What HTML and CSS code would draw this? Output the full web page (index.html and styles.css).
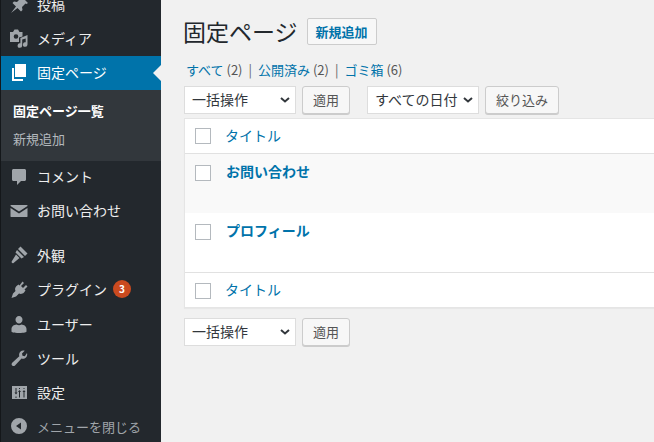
FILE: index.html
```html
<!DOCTYPE html>
<html lang="ja">
<head>
    <meta charset="UTF-8">
    <meta name="viewport" content="width=device-width, initial-scale=1.0">
    <title>固定ページ</title>
    <link rel="stylesheet" href="styles.css">
</head>
<body>
    <aside class="sidebar">
        <ul class="menu">
            <li class="menu-item">
                <svg class="menu-icon" viewBox="0 0 20 20"><path d="M11 1l8 8-1.500 1-1-.5-3.500 3.500.500 3-1.500 1.500-3.500-3.500L2 19l5-6.500-3.500-3.500L5 7.500l3 .5 3.500-3.500-.5-1z"/></svg>
                <span>投稿</span>
            </li>
            <li class="menu-item">
                <svg class="menu-icon" viewBox="0 0 20 20"><path fill-rule="evenodd" d="M1 4h3l1.500-2.500H9L10.500 4h3v4.500l-3.500 1V14H1zm6 2.200a2.300 2.300 0 1 0 0 4.600 2.300 2.300 0 0 0 0-4.600z"/><path d="M18.500 7v9.500a2.300 2.300 0 1 1-1.800-2.200v-3.800l-3.500 1v6a2.300 2.300 0 1 1-1.800-2.200V10z"/></svg>
                <span>メディア</span>
            </li>
            <li class="menu-item current">
                <svg class="menu-icon" viewBox="0 0 20 20"><path d="M6 2h11v13H6z"/><path d="M3 6h2v11h9v2H3z"/></svg>
                <span>固定ページ</span>
            </li>
            <li class="submenu">
                <div class="submenu-item active">固定ページ一覧</div>
                <div class="submenu-item">新規追加</div>
            </li>
            <li class="menu-item after-submenu">
                <svg class="menu-icon" viewBox="0 0 20 20"><path d="M4.500 3h11c.8 0 1.500.7 1.500 1.500v9c0 .8-.7 1.500-1.500 1.500H12l-4 4v-4H4.500C3.700 15 3 14.300 3 13.500v-9C3 3.700 3.700 3 4.500 3z"/></svg>
                <span>コメント</span>
            </li>
            <li class="menu-item">
                <svg class="menu-icon" viewBox="0 0 20 20"><path d="M2 5h16c.3 0 .5.200.5.500V6L10 11.500 1.500 6v-.5c0-.3.200-.5.500-.5zM1.500 8l8.500 5.500L18.500 8v8.500c0 .3-.2.500-.5.500H2c-.3 0-.5-.2-.5-.5z"/></svg>
                <span>お問い合わせ</span>
            </li>
            <li class="menu-item group-start">
                <svg class="menu-icon" viewBox="0 0 20 20"><path d="M11.500 1.500l7 7L16 11 9 4z"/><path d="M8 5l7 7-2.500 1.500-6-6z"/><path d="M7 9.500l3.500 3.500-6 5c-1 .8-2.500-.7-1.700-1.700z"/></svg>
                <span>外観</span>
            </li>
            <li class="menu-item plugins">
                <svg class="menu-icon" viewBox="0 0 20 20"><path d="M13.500 2.500l1.500 1.500-3 3 2 2 3-3 1.500 1.500-3 3 1 1-1.500 2c-1.500 1.500-3.500 1.800-5 1L7 17.500 2.500 19l1.500-4.500 2.500-2.500c-.8-1.500-.5-3.500 1-5l2-1.500 1 1z"/></svg>
                <span>プラグイン</span>
                <span class="badge">3</span>
            </li>
            <li class="menu-item">
                <svg class="menu-icon" viewBox="0 0 20 20"><path d="M10 2a3.500 3.500 0 0 1 3.500 3.800c0 2-1.500 3.700-3.500 3.700S6.500 7.800 6.500 5.800A3.500 3.500 0 0 1 10 2zm-2.500 8.500c1.500 1 3.500 1 5 0 2.500.3 5 1.800 5 4.500v2.500c0 .5-2 1.500-7.500 1.500s-7.500-1-7.500-1.500V15c0-2.700 2.500-4.200 5-4.500z"/></svg>
                <span>ユーザー</span>
            </li>
            <li class="menu-item">
                <svg class="menu-icon" viewBox="0 0 20 20"><path d="M18 5c.5 1.500.2 3.200-1 4.400-1.200 1.200-3 1.500-4.500 1L6 17.500c-.8.800-2 .8-2.800 0-.8-.8-.8-2 0-2.800l7.100-6.500c-.5-1.500-.2-3.300 1-4.500C12.500 2.500 14.200 2.200 15.700 2.700L13 5.400l.5 2.300 2.300.5z"/></svg>
                <span>ツール</span>
            </li>
            <li class="menu-item">
                <svg class="menu-icon" viewBox="0 0 20 20"><path fill-rule="evenodd" d="M3 4h15v13H3zM6.500 6v4.500H5.500l1.500 2 1.500-2H7.500V6zm0 8.500V16h1v-1.500zM11 15.500V10h1l-1.500-2L9 10h1v5.500zm0-8.500V6h-1v1zm4.500 8.500V10h1L15 8l-1.500 2h1v5.500zm0-8.500V6h-1v1z"/></svg>
                <span>設定</span>
            </li>
            <li class="menu-item collapse">
                <svg class="menu-icon" viewBox="0 0 20 20"><path fill-rule="evenodd" d="M10 2a8 8 0 1 1 0 16 8 8 0 0 1 0-16zm2 4.500L7 10l5 3.500z"/></svg>
                <span>メニューを閉じる</span>
            </li>
        </ul>
    </aside>

    <main class="content">
        <div class="heading">
            <h1>固定ページ</h1>
            <a class="add-new">新規追加</a>
        </div>
        <ul class="views">
            <li><a>すべて</a> (2)</li>
            <li class="sep">|</li>
            <li><a>公開済み</a> (2)</li>
            <li class="sep">|</li>
            <li><a>ゴミ箱</a> (6)</li>
        </ul>
        <div class="tablenav">
            <div class="select bulk">一括操作<svg viewBox="0 0 10 6"><path d="M1 1l4 3.500L9 1"/></svg></div>
            <button type="button">適用</button>
            <div class="select dates">すべての日付<svg viewBox="0 0 10 6"><path d="M1 1l4 3.500L9 1"/></svg></div>
            <button type="button">絞り込み</button>
        </div>
        <table class="pages">
            <thead>
                <tr><td class="check"><span class="box"></span></td><td class="col-title">タイトル</td></tr>
            </thead>
            <tbody>
                <tr class="alt"><td class="check"><span class="box"></span></td><td class="row-title">お問い合わせ</td></tr>
                <tr><td class="check"><span class="box"></span></td><td class="row-title">プロフィール</td></tr>
            </tbody>
            <tfoot>
                <tr><td class="check"><span class="box"></span></td><td class="col-title">タイトル</td></tr>
            </tfoot>
        </table>
        <div class="tablenav bottom">
            <div class="select bulk">一括操作<svg viewBox="0 0 10 6"><path d="M1 1l4 3.500L9 1"/></svg></div>
            <button type="button">適用</button>
        </div>
    </main>
</body>
</html>
```

FILE: styles.css
```css
* {
    box-sizing: border-box;
}

html, body {
    height: 100%;
}

body {
    margin: 0;
    display: flex;
    overflow: hidden;
    background-color: #f1f1f1;
    color: #444;
    font-family: "Noto Sans CJK JP", "Noto Sans", sans-serif;
    font-size: 13px;
}

/* Sidebar */
.sidebar {
    flex: 0 0 161px;
    background-color: #23282d;
    border-left: 1px solid #14171a;
    overflow: hidden;
}

.menu {
    list-style: none;
    margin: -12px 0 0;
    padding: 0;
}

.menu-item {
    position: relative;
    display: flex;
    align-items: center;
    height: 34px;
    padding: 0 0 2px 8px;
    color: #eee;
    font-size: 14px;
}

.menu-icon {
    flex: none;
    width: 20px;
    height: 20px;
    margin-right: 8px;
    fill: #a0a5aa;
}

.menu-item.current {
    background-color: #0073aa;
    color: #fff;
}

.menu-item.current .menu-icon {
    fill: #fff;
}

.menu-item.current::after {
    content: "";
    position: absolute;
    right: 0;
    top: 9px;
    border: 8px solid transparent;
    border-left: 0;
    border-right-color: #f1f1f1;
}

.menu-item.after-submenu {
    margin-top: -1px;
}

.menu-item.group-start {
    margin-top: 11px;
}

.menu-item.plugins {
    margin-bottom: 1px;
}

.menu-item.collapse {
    color: #a0a5aa;
    font-size: 13px;
}

.submenu {
    height: 71px;
    padding: 8px 0;
    background-color: #32373c;
}

.submenu-item {
    height: 28px;
    padding-left: 12px;
    color: #b4b9be;
    font-size: 13px;
    line-height: 26px;
}

.submenu-item.active {
    color: #fff;
    font-weight: 700;
}

.badge {
    width: 18px;
    height: 18px;
    margin-left: 6px;
    border-radius: 50%;
    background-color: #ca4a1f;
    color: #fff;
    font-size: 10px;
    font-weight: 700;
    line-height: 18px;
    text-align: center;
}

/* Main */
.content {
    flex: 1;
    min-width: 0;
    padding: 18px 0 0 23px;
}

.heading {
    display: flex;
    align-items: center;
    height: 27px;
}

.heading h1 {
    margin: 0 9px 0 -1px;
    color: #23282d;
    font-size: 23px;
    font-weight: 400;
    line-height: 27px;
}

.add-new {
    width: 70px;
    height: 27px;
    border: 1px solid #ccc;
    border-radius: 2px;
    background-color: #f7f7f7;
    color: #0073aa;
    font-size: 13px;
    font-weight: 600;
    line-height: 25px;
    text-align: center;
}

.views {
    display: flex;
    gap: 5px;
    list-style: none;
    height: 20px;
    margin: 15px 0 0;
    padding: 0 0 0 2px;
    color: #555;
    font-size: 13px;
    line-height: 20px;
}

.views a {
    color: #0073aa;
}

.views .sep {
    margin: 0 1px;
    color: #666;
}

.tablenav {
    display: flex;
    height: 28px;
    margin-top: 6px;
}

.tablenav.bottom {
    margin-top: 10px;
}

.select {
    display: flex;
    align-items: center;
    justify-content: space-between;
    width: 112px;
    height: 28px;
    padding: 0 5px 2px 7px;
    border: 1px solid #ddd;
    background-color: #fff;
    color: #32373c;
    font-size: 14px;
}

.select svg {
    width: 10px;
    height: 6px;
    margin-top: 2px;
    fill: none;
    stroke: #32373c;
    stroke-width: 2;
}

.tablenav button {
    height: 28px;
    margin-left: 6px;
    padding: 0 10px 2px;
    border: 1px solid #ccc;
    border-radius: 3px;
    box-shadow: 0 1px 0 #ccc;
    background-color: #f7f7f7;
    color: #555;
    font-family: inherit;
    font-size: 13px;
}

.select.dates {
    margin-left: 17px;
}

.pages {
    width: 600px;
    margin-top: 4px;
    border: 1px solid #e5e5e5;
    border-right: 0;
    border-spacing: 0;
    background-color: #fff;
    box-shadow: 0 1px 1px rgba(0, 0, 0, 0.04);
}

.pages td {
    padding: 0;
    vertical-align: top;
}

.pages thead tr, .pages tfoot tr {
    height: 35px;
}

.pages thead td {
    border-bottom: 1px solid #e1e1e1;
}

.pages tfoot td {
    border-top: 1px solid #e1e1e1;
}

.pages tbody tr {
    height: 59px;
}

.pages tr.alt {
    background-color: #f9f9f9;
}

.check {
    width: 40px;
}

.box {
    display: block;
    width: 16px;
    height: 16px;
    margin: 11px 0 0 10px;
    border: 1px solid #b4b9be;
    background-color: #fff;
}

thead .box {
    margin-top: 9px;
}

tfoot .box {
    margin-top: 10px;
}

.col-title {
    color: #0073aa;
    font-size: 14px;
    line-height: 33px;
}

.row-title {
    padding: 5px 0 0 1px !important;
    color: #0073aa;
    font-size: 14px;
    font-weight: 600;
    line-height: 24px;
}
```
